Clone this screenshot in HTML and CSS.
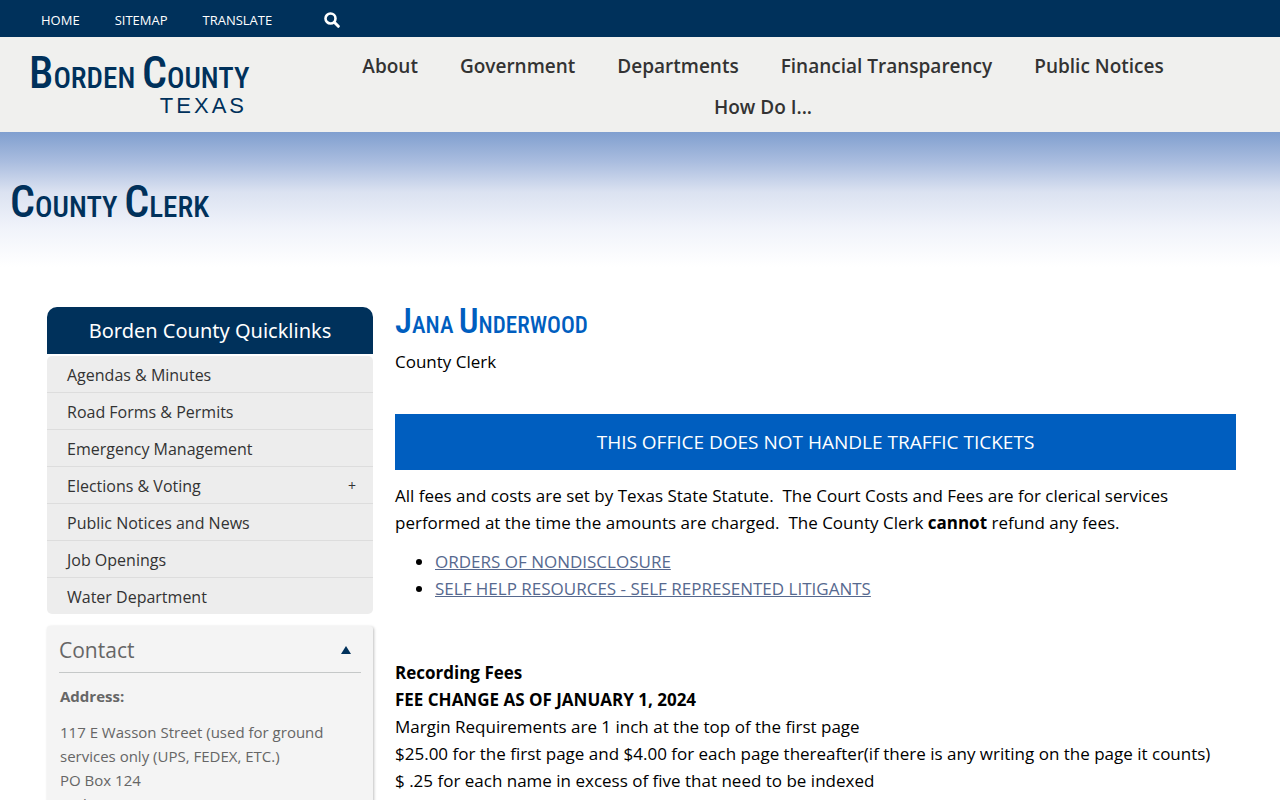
FILE: index.html
```html
<!DOCTYPE html>
<html lang="en">
<head>
<meta charset="utf-8">
<meta name="viewport" content="width=device-width, initial-scale=1">
<title>County Clerk - Borden County, Texas</title>
<link rel="stylesheet" href="styles.css">
</head>
<body>
<nav class="topbar" aria-label="Utility">
  <a href="#">HOME</a>
  <a href="#">SITEMAP</a>
  <a href="#">TRANSLATE</a>
  <button class="search" type="button" aria-label="Search">
    <svg width="16" height="16" viewBox="0 0 16 16" aria-hidden="true"><circle cx="6.5" cy="6.5" r="5" fill="none" stroke="currentColor" stroke-width="2.6"/><path d="M10.3 10.3 14.3 14.3" stroke="currentColor" stroke-width="3" stroke-linecap="round"/></svg>
  </button>
</nav>
<header class="header">
  <a class="logo" href="#">
    <span class="logo-name display"><span class="cap">B</span>orden <span class="cap">C</span>ounty</span>
    <span class="logo-state">TEXAS</span>
  </a>
  <nav class="mainnav" aria-label="Main">
    <a href="#">About</a>
    <a href="#">Government</a>
    <a href="#">Departments</a>
    <a href="#">Financial Transparency</a>
    <a href="#">Public Notices</a>
    <a href="#">How Do I...</a>
  </nav>
</header>
<div class="banner"><h1 class="display"><span class="cap">C</span>ounty <span class="cap">C</span>lerk</h1></div>
<div class="page">
  <aside class="side">
    <nav class="quick" aria-label="Quicklinks">
      <h2>Borden County Quicklinks</h2>
      <ul>
        <li><a href="#">Agendas &amp; Minutes</a></li>
        <li><a href="#">Road Forms &amp; Permits</a></li>
        <li><a href="#">Emergency Management</a></li>
        <li><a href="#">Elections &amp; Voting</a><button class="expand" type="button" aria-label="Expand Elections &amp; Voting">+</button></li>
        <li><a href="#">Public Notices and News</a></li>
        <li><a href="#">Job Openings</a></li>
        <li><a href="#">Water Department</a></li>
      </ul>
    </nav>
    <section class="contact">
      <div class="contact-head">
        <h2>Contact</h2>
        <button class="collapse" type="button" aria-label="Collapse contact">
          <svg width="10" height="8" viewBox="0 0 10 8" aria-hidden="true"><path d="M5 0 10 8H0Z" fill="currentColor"/></svg>
        </button>
      </div>
      <div class="contact-body">
        <h3>Address:</h3>
        <address>117 E Wasson Street (used for ground<br>services only (UPS, FEDEX, ETC.)<br>PO Box 124<br>Gail, TX 79738</address>
      </div>
    </section>
  </aside>
  <main class="main">
    <h2 class="display"><span class="cap">J</span>ana <span class="cap">U</span>nderwood</h2>
    <p class="role">County Clerk</p>
    <p class="notice">THIS OFFICE DOES NOT HANDLE TRAFFIC TICKETS</p>
    <p class="intro">All fees and costs are set by Texas State Statute.&nbsp; The Court Costs and Fees are for clerical services performed at the time the amounts are charged.&nbsp; The County Clerk <strong>cannot</strong> refund any fees.</p>
    <ul class="links">
      <li><a href="#">ORDERS OF NONDISCLOSURE</a></li>
      <li><a href="#">SELF HELP RESOURCES - SELF REPRESENTED LITIGANTS</a></li>
    </ul>
    <p class="fees"><strong>Recording Fees</strong><br><strong>FEE CHANGE AS OF JANUARY 1, 2024</strong><br>Margin Requirements are 1 inch at the top of the first page<br>$25.00 for the first page and $4.00 for each page thereafter(if there is any writing on the page it counts)<br>$ .25 for each name in excess of five that need to be indexed</p>
  </main>
</div>
</body>
</html>
```
FILE: styles.css
```css
* { box-sizing: border-box; }
body { margin: 0; font: 17px/27px "Open Sans", "Noto Sans", sans-serif; color: #000; background: #fff; }
h1, h2, h3, p, ul { margin: 0; padding: 0; }
button { border: 0; background: none; padding: 0; color: inherit; font: inherit; cursor: pointer; }
a { color: inherit; text-decoration: none; }

/* Art-deco style small capitals with tall initials */
.display { font-family: "Roboto Condensed", Roboto, sans-serif; font-weight: 500; text-transform: uppercase; white-space: nowrap; }
.display .cap { line-height: 0; }

.topbar { display: flex; align-items: center; gap: 35px; padding: 3px 41px 0; background: #00315b; color: #fff; font-size: 13px; line-height: 34px; }
.search { display: flex; margin-left: 17px; }

.header { display: flex; min-height: 95px; background: #f0f0ee; }
.logo { display: flex; flex-direction: column; width: 218px; margin: 18px 0 0 29px; color: #00315b; }
.logo-name { font-size: 29px; line-height: 33px; padding-top: 7px; }
.logo-name .cap, h1 .cap { font-size: 44px; }
.logo-state { align-self: flex-end; margin-top: 2px; font: 22px/18px "Liberation Sans", sans-serif; letter-spacing: 3px; }
.mainnav { flex: 1; display: flex; flex-wrap: wrap; justify-content: center; align-content: flex-start; column-gap: 42px; margin: 0 97px 0 96px; padding-top: 9px; color: #333; font-weight: 600; font-size: 19px; line-height: 41px; }

.banner { padding: 48px 10px 33px; background: linear-gradient(#809fcf 0, #aabddf 30px, #dbe2f1 60px, #f0f3fa 95px, #fff 135px); }
h1 { color: #00315b; font-size: 29px; line-height: 54px; }

.page { display: grid; grid-template-columns: 326px 1fr; column-gap: 22px; padding: 40px 44px 40px 47px; }
.quick h2 { margin-bottom: 2px; border-radius: 10px 10px 0 0; background: #00315b; color: #fff; font: 20px/47px "Noto Sans", sans-serif; text-align: center; }
.quick ul { list-style: none; overflow: hidden; border-radius: 5px; background: #ededed; color: #333; font-size: 16px; line-height: 34px; }
.quick li { display: flex; justify-content: space-between; padding: 2px 17px 0 20px; }
.quick li + li { border-top: 1px solid #ddd; }
.expand { font-size: 14px; }
.contact { margin-top: 12px; padding: 0 12px 20px; border-radius: 3px; background: #f4f4f4; box-shadow: 1px 1px 3px rgba(0,0,0,.25); color: #666; font-size: 15px; line-height: 24px; }
.contact-head { display: flex; justify-content: space-between; align-items: center; padding: 2px 10px 0 0; border-bottom: 1px solid #c5c8c8; }
.contact-head h2 { font-weight: 400; font-size: 21px; line-height: 44px; }
.collapse { display: flex; color: #00315b; }
.contact-body { padding: 11px 1px 0; }
.contact-body h3 { margin-bottom: 12px; font-size: 15px; }
address { font-style: normal; }

.main .display { color: #005ebf; font-size: 23px; line-height: 30px; padding-top: 4px; }
.main .display .cap { font-size: 35px; }
.role { margin-top: 7px; }
.notice { margin: 39px 0 12px; padding: 14px; background: #005ebf; color: #fff; font-size: 19px; line-height: 28px; text-align: center; }
.links { margin: 12px 0 57px; padding-left: 40px; }
.links a { color: #56698f; text-decoration: underline; }
```
